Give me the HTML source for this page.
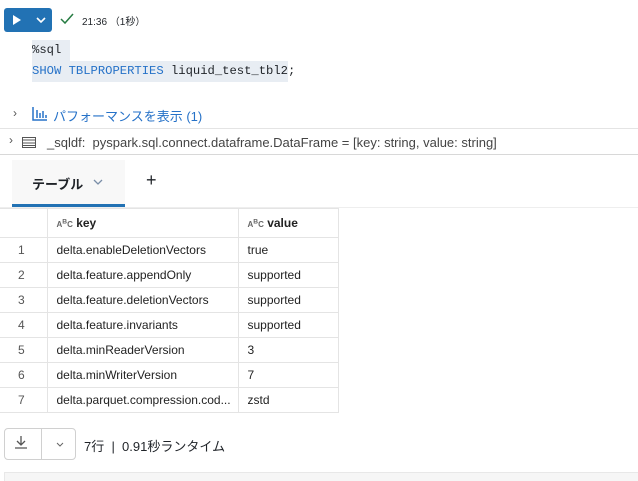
<!DOCTYPE html><html><head><style>
body{margin:0;width:638px;height:478px;background:#fff;font-family:"Liberation Sans","Noto Sans CJK JP",sans-serif;color:#1f2328;position:relative;overflow:hidden;font-size:13px}
.a{position:absolute}
.mono{font-family:"Liberation Mono",monospace;font-size:12.2px}
table{border-collapse:collapse;position:absolute;left:0;top:208px;font-size:12px;table-layout:fixed;width:338px}
td{border:1px solid #e4e4e4;height:25px;padding:0 0 0 9px;color:#222;box-sizing:border-box;white-space:nowrap;overflow:hidden}
td.n{padding-left:18px;color:#555;border-left:none}
</style></head><body>
<div class="a" style="left:4px;top:8px;width:48px;height:24px;background:#2272b4;border-radius:3px"></div>
<svg class="a" style="left:12px;top:14px" width="40" height="12"><path d="M1 1L9 6L1 11Z" fill="#fff"/><path d="M25 4L29 8L33 4" stroke="#fff" stroke-width="1.6" fill="none"/></svg>
<svg class="a" style="left:60px;top:13px" width="14" height="12"><path d="M1 6L5 10L13 1" stroke="#277c43" stroke-width="1.5" fill="none"/></svg>
<div class="a" style="left:82px;top:13px;font-size:10px">21:36 （1秒）</div>
<div class="a" style="left:32px;top:61px;width:256px;height:21px;background:#e8edf3"></div>
<div class="a" style="left:32px;top:40px;width:38px;height:21px;background:#e8edf3"></div>
<div class="a mono" style="left:32px;top:40px;line-height:21px">%sql<br><span style="color:#2672c8">SHOW TBLPROPERTIES</span> liquid_test_tbl2;</div>
<div class="a" style="left:13px;top:106px;color:#555;font-size:12px">›</div>
<svg class="a" style="left:32px;top:107px" width="16" height="14"><path d="M1 0V13H15M5 3V11M8 6V11M11 4V11M14 8V11" stroke="#2672c8" stroke-width="1.5" fill="none"/></svg>
<div class="a" style="left:53px;top:106px;color:#2672c8;font-size:13px">パフォーマンスを表示 (1)</div>
<div class="a" style="left:0;top:128px;width:638px;border-top:1px solid #e4e4e4"></div>
<div class="a" style="left:9px;top:133px;color:#555;font-size:12px">›</div>
<svg class="a" style="left:22px;top:137px" width="14" height="11"><rect x="0.5" y="0.5" width="13" height="10" fill="none" stroke="#555"/><path d="M1 3H13M1 6H13M1 8.5H13" stroke="#555"/></svg>
<div class="a" style="left:47px;top:135px;color:#444;font-size:13px">_sqldf:&nbsp; pyspark.sql.connect.dataframe.DataFrame = [key: string, value: string]</div>
<div class="a" style="left:0;top:154px;width:638px;border-top:1px solid #d8d8d8"></div>
<div class="a" style="left:12px;top:160px;width:113px;height:45px;background:#f8f8f8"></div>
<div class="a" style="left:12px;top:204px;width:113px;height:3px;background:#2272b4"></div>
<div class="a" style="left:32px;top:174px;font-weight:bold;font-size:13px">テーブル</div>
<svg class="a" style="left:93px;top:179px" width="10" height="6"><path d="M1 1L5 5L9 1" stroke="#7a8ea8" stroke-width="1.3" fill="none"/></svg>
<div class="a" style="left:146px;top:170px;font-size:18px;font-weight:300">+</div>
<div class="a" style="left:0;top:207px;width:638px;border-top:1px solid #eee"></div>
<table>
<colgroup><col style="width:47px"><col style="width:191px"><col style="width:100px"></colgroup>
<tr><td class="n" style="height:29px"></td><td style="font-weight:bold"><span style="font-size:8px;color:#666">A<sup>B</sup>C</span> key</td><td style="font-weight:bold"><span style="font-size:8px;color:#666">A<sup>B</sup>C</span> value</td></tr>
<tr><td class="n">1</td><td>delta.enableDeletionVectors</td><td>true</td></tr>
<tr><td class="n">2</td><td>delta.feature.appendOnly</td><td>supported</td></tr>
<tr><td class="n">3</td><td>delta.feature.deletionVectors</td><td>supported</td></tr>
<tr><td class="n">4</td><td>delta.feature.invariants</td><td>supported</td></tr>
<tr><td class="n">5</td><td>delta.minReaderVersion</td><td>3</td></tr>
<tr><td class="n">6</td><td>delta.minWriterVersion</td><td>7</td></tr>
<tr><td class="n">7</td><td>delta.parquet.compression.cod...</td><td>zstd</td></tr>
</table>
<div class="a" style="left:4px;top:428px;width:70px;height:30px;border:1px solid #d0d0d0;border-radius:4px"></div>
<div class="a" style="left:41px;top:429px;height:30px;border-left:1px solid #d0d0d0"></div>
<svg class="a" style="left:14px;top:435px" width="14" height="14"><path d="M7 1V9M3 6L7 10L11 6M1 13H13" stroke="#555" stroke-width="1.3" fill="none"/></svg>
<svg class="a" style="left:56px;top:442px" width="8" height="5"><path d="M1 1L4 4L7 1" stroke="#666" fill="none"/></svg>
<div class="a" style="left:84px;top:436px;font-size:13px">7行 &nbsp;|&nbsp; 0.91秒ランタイム</div>
<div class="a" style="left:4px;top:472px;width:634px;height:8px;background:#f6f6f6;border-top:1px solid #e8e8e8;border-left:1px solid #e8e8e8"></div>
</body></html>
